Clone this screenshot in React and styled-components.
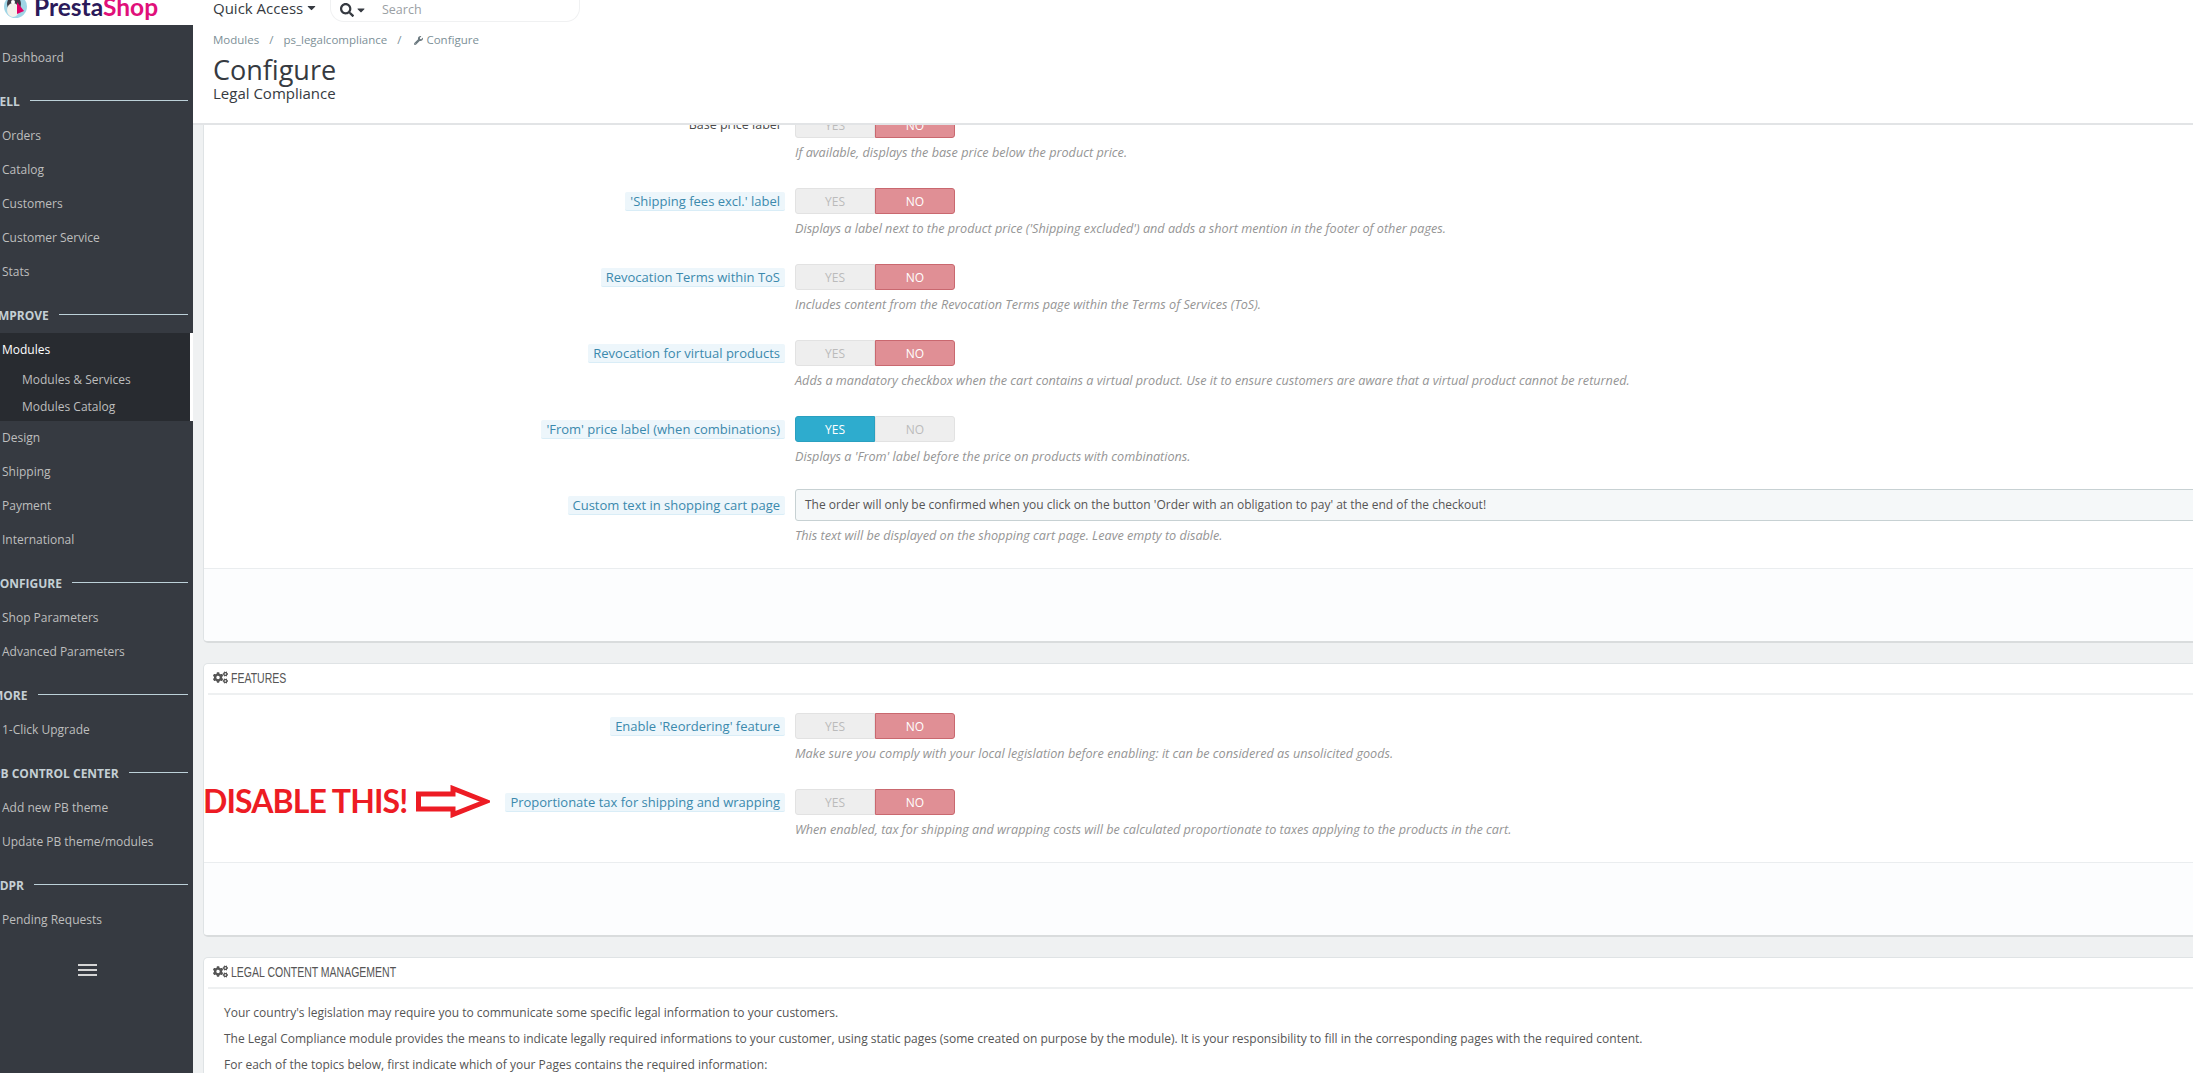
import React from "react";
import styled, { createGlobalStyle } from "styled-components";
import { FaCaretDown, FaCogs, FaSearch, FaWrench } from "react-icons/fa";

const Global = createGlobalStyle`
  html, body { margin: 0; padding: 0; height: 100%; overflow: hidden; background: #eff1f2; }
  body { font-family: "Open Sans", "Liberation Sans", sans-serif; font-size: 12px; color: #555; }
  * { box-sizing: border-box; }
`;

const Page = styled.div`
  display: grid;
  grid-template-columns: 193px 1fr;
  height: 1073px;
  width: 2193px;
  overflow: hidden;
`;
const LeftColumn = styled.div`
  display: flex;
  flex-direction: column;
  height: 1073px;
  background: #fff;
`;
const LogoBar = styled.div`
  height: 25px;
  display: flex;
  align-items: flex-start;
  padding-left: 4px;
  overflow: hidden;
  background: #fff;
`;
const LogoMark = styled.svg`
  width: 23px;
  height: 23px;
  margin-top: -5px;
  flex: none;
`;
const LogoText = styled.span`
  font-family: "Lato", sans-serif;
  font-weight: 700;
  font-size: 24.5px;
  line-height: 25px;
  margin: -6px 0 0 7px;
  color: #2b1a5a;
`;
const LogoPink = styled.span`
  color: #e0107a;
`;
const Sidebar = styled.nav`
  flex: 1;
  background: #363a41;
  padding-top: 16px;
  overflow: hidden;
`;
const NavItem = styled.div`
  height: 34px;
  line-height: 33px;
  padding-left: 2px;
  color: ${(p) => (p.$active ? "#fff" : "#bebebe")};
  white-space: nowrap;
`;
const ActiveBlock = styled.div`
  background: #282b30;
  border-right: 3px solid #fff;
  height: 88px;
`;
const SubItem = styled.div`
  height: 27px;
  line-height: 26px;
  padding-left: 22px;
  color: #bebebe;
`;
const Section = styled.div`
  height: 44px;
  display: flex;
  align-items: flex-end;
  padding-bottom: 9px;
  padding-right: 5px;
  margin-left: ${(p) => p.$shift}px;
  gap: 10px;
`;
const SectionName = styled.span`
  font-weight: 700;
  font-size: 12px;
  line-height: 16px;
  color: #c4cfd4;
  white-space: nowrap;
`;
const SectionRule = styled.span`
  flex: 1;
  height: 1px;
  background: #bcd0d8;
  margin-bottom: 9px;
`;
const Burger = styled.div`
  width: 19px;
  margin: 27px 0 0 78px;
  display: grid;
  gap: 3px;
`;
const BurgerBar = styled.span`
  height: 2px;
  background: #d5d5d5;
`;

const RightColumn = styled.div`
  display: flex;
  flex-direction: column;
  height: 1073px;
  min-width: 0;
`;
const Header = styled.header`
  height: 125px;
  flex: none;
  background: #fff;
  border-bottom: 2px solid #e2e4e6;
  padding-left: 20px;
  display: flex;
  flex-direction: column;
`;
const TopBar = styled.div`
  height: 24px;
  display: flex;
  align-items: flex-start;
`;
const QuickAccess = styled.div`
  display: flex;
  align-items: center;
  width: 117px;
  height: 15px;
  font-size: 15px;
  color: #363a41;
  gap: 2px;
`;
const SearchPill = styled.div`
  width: 250px;
  height: 24px;
  margin-top: -2px;
  border: 1px solid #f0f1f2;
  border-top: none;
  border-radius: 0 0 14px 14px;
  display: flex;
  align-items: center;
  padding-left: 9px;
  color: #363a41;
`;
const SearchHint = styled.span`
  margin-left: 15px;
  font-size: 12.5px;
  color: #9aa0a4;
`;
const Crumbs = styled.div`
  margin-top: 7px;
  height: 18px;
  line-height: 18px;
  font-size: 11.5px;
  color: #7d9097;
  display: flex;
  align-items: center;
`;
const CrumbSep = styled.span`
  margin: 0 10px;
`;
const CrumbIcon = styled.span`
  display: inline-flex;
  margin: 0 3px;
  color: #6c7a80;
`;
const Title = styled.h1`
  margin: 7px 0 0;
  font-weight: 400;
  font-size: 27px;
  line-height: 28px;
  color: #363a41;
`;
const Subtitle = styled.div`
  font-size: 15px;
  line-height: 18px;
  color: #363a41;
`;

const ScrollArea = styled.main`
  flex: 1;
  overflow: hidden;
  padding-left: 10px;
`;
const Scrolled = styled.div`
  margin-top: -17px;
  margin-right: -40px;
  display: flex;
  flex-direction: column;
  gap: 20px;
`;
const Panel = styled.section`
  background: #fff;
  border: 1px solid #dfe3e5;
  border-bottom: 2px solid #d9dcdd;
  border-radius: 5px;
  overflow: hidden;
`;
const PanelHead = styled.h3`
  margin: 0 4px;
  height: 31px;
  border-bottom: 2px solid #eef0f1;
  display: flex;
  align-items: center;
  padding: 0 0 2px 5px;
  color: #555;
  font-weight: 400;
`;
const HeadIcon = styled.span`
  display: inline-flex;
  color: #555;
  width: 18px;
`;
const HeadText = styled.span`
  display: inline-block;
  font-family: "Liberation Sans", sans-serif;
  font-size: 14px;
  white-space: nowrap;
  transform: scaleX(0.75);
  transform-origin: left center;
`;
const FormBody = styled.div`
  padding-top: ${(p) => p.$top || 0}px;
`;
const Row = styled.div`
  display: grid;
  grid-template-columns: 581px 1fr;
  column-gap: 10px;
  min-height: ${(p) => (p.$tall ? 79 : 76)}px;
  position: relative;
`;
const LabelCell = styled.div`
  display: flex;
  justify-content: flex-end;
  align-items: flex-start;
  padding-top: 7px;
`;
const Label = styled.span`
  height: 19px;
  line-height: 18px;
  padding: 0 5px;
  white-space: nowrap;
  font-size: ${(p) => (p.$hint ? 13 : 12.5)}px;
  color: ${(p) => (p.$hint ? "#3b89ad" : "#4a4a4a")};
  background: ${(p) => (p.$hint ? "#edf6fb" : "transparent")};
  border-bottom: 1px solid ${(p) => (p.$hint ? "#d9edf7" : "transparent")};
  border-radius: 2px;
`;
const Toggle = styled.div`
  display: flex;
  width: 160px;
  height: 26px;
  margin-top: 3px;
`;
const ToggleSide = styled.span`
  width: 80px;
  display: flex;
  align-items: center;
  justify-content: center;
  font-size: 12px;
  border: 1px solid;
  border-radius: ${(p) => (p.$left ? "3px 0 0 3px" : "0 3px 3px 0")};
  background: ${(p) => (p.$on === "no" ? "#e08f95" : p.$on === "yes" ? "#2eacce" : "#eee")};
  border-color: ${(p) => (p.$on === "no" ? "#c9686f" : p.$on === "yes" ? "#2aa0c0" : "#e2e2e2")};
  color: ${(p) => (p.$on ? "#fff" : "#bbb")};
`;
const TextField = styled.div`
  height: 32px;
  width: 1500px;
  background: #f5f8f9;
  border: 1px solid #c7d1d3;
  border-radius: 3px;
  padding-left: 9px;
  line-height: 30px;
  font-size: 12px;
  color: #555;
  white-space: nowrap;
`;
const Help = styled.p`
  margin: 5px 0 0;
  line-height: 18px;
  font-size: 12.65px;
  font-style: italic;
  color: #959595;
  white-space: nowrap;
`;
const PanelFoot = styled.div`
  height: 73px;
  background: #fcfdfe;
  border-top: 1px solid #eaedef;
`;
const Annotation = styled.div`
  position: absolute;
  left: -1px;
  top: -2px;
  display: flex;
  align-items: center;
  gap: 9px;
`;
const AnnotationText = styled.span`
  font-family: "Lato", sans-serif;
  font-weight: 700;
  font-size: 32px;
  line-height: 34px;
  letter-spacing: -0.9px;
  color: #ed1c24;
  white-space: nowrap;
`;
const Copy = styled.p`
  margin: 0;
  padding-left: 20px;
  line-height: 26px;
  white-space: nowrap;
  font-size: 12px;
  color: #555;
`;
const CopyBlock = styled.div`
  padding-top: 11px;
  padding-bottom: 20px;
`;

const Toggler = ({ on }) => (
  <Toggle>
    <ToggleSide $left $on={on === "yes" ? "yes" : undefined}>YES</ToggleSide>
    <ToggleSide $on={on === "no" ? "no" : undefined}>NO</ToggleSide>
  </Toggle>
);

const FormRow = ({ label, help, on = "no", hint = true, children }) => (
  <Row>
    <LabelCell><Label $hint={hint}>{label}</Label></LabelCell>
    <div>
      <Toggler on={on} />
      <Help>{help}</Help>
    </div>
    {children}
  </Row>
);

const Item = ({ children }) => <NavItem>{children}</NavItem>;
const Sec = ({ shift, children }) => (
  <Section $shift={shift}>
    <SectionName>{children}</SectionName>
    <SectionRule />
  </Section>
);

export default function App() {
  return (
    <Page>
      <Global />
      <LeftColumn>
        <LogoBar>
          <LogoMark viewBox="0 0 23 23">
            <circle cx="11.5" cy="11.5" r="11.5" fill="#9fd5e6" />
            <ellipse cx="10" cy="9" rx="7" ry="8" fill="#3c3a44" />
            <ellipse cx="9" cy="15" rx="6" ry="7" fill="#f4f1ea" />
            <path d="M13 7 L20 16 L13 19 Z" fill="#df0067" />
            <circle cx="9" cy="7" r="2" fill="#fff" />
          </LogoMark>
          <LogoText>Presta<LogoPink>Shop</LogoPink></LogoText>
        </LogoBar>
        <Sidebar>
          <Item>Dashboard</Item>
          <Sec shift={-7}>SELL</Sec>
          <Item>Orders</Item>
          <Item>Catalog</Item>
          <Item>Customers</Item>
          <Item>Customer Service</Item>
          <Item>Stats</Item>
          <Sec shift={-6}>IMPROVE</Sec>
          <ActiveBlock>
            <NavItem $active>Modules</NavItem>
            <SubItem>Modules &amp; Services</SubItem>
            <SubItem>Modules Catalog</SubItem>
          </ActiveBlock>
          <Item>Design</Item>
          <Item>Shipping</Item>
          <Item>Payment</Item>
          <Item>International</Item>
          <Sec shift={-8}>CONFIGURE</Sec>
          <Item>Shop Parameters</Item>
          <Item>Advanced Parameters</Item>
          <Sec shift={-8}>MORE</Sec>
          <Item>1-Click Upgrade</Item>
          <Sec shift={-7}>PB CONTROL CENTER</Sec>
          <Item>Add new PB theme</Item>
          <Item>Update PB theme/modules</Item>
          <Sec shift={-9}>GDPR</Sec>
          <Item>Pending Requests</Item>
          <Burger><BurgerBar /><BurgerBar /><BurgerBar /></Burger>
        </Sidebar>
      </LeftColumn>
      <RightColumn>
        <Header>
          <TopBar>
            <QuickAccess>Quick Access <FaCaretDown size={13} /></QuickAccess>
            <SearchPill>
              <FaSearch size={14} />
              <FaCaretDown size={12} style={{ marginLeft: 1 }} />
              <SearchHint>Search</SearchHint>
            </SearchPill>
          </TopBar>
          <Crumbs>
            Modules<CrumbSep>/</CrumbSep>ps_legalcompliance<CrumbSep>/</CrumbSep>
            <CrumbIcon><FaWrench size={9} /></CrumbIcon>Configure
          </Crumbs>
          <Title>Configure</Title>
          <Subtitle>Legal Compliance</Subtitle>
        </Header>
        <ScrollArea>
          <Scrolled>
            <Panel>
              <FormRow hint={false} label="Base price label" help="If available, displays the base price below the product price." />
              <FormRow label="'Shipping fees excl.' label" help="Displays a label next to the product price ('Shipping excluded') and adds a short mention in the footer of other pages." />
              <FormRow label="Revocation Terms within ToS" help="Includes content from the Revocation Terms page within the Terms of Services (ToS)." />
              <FormRow label="Revocation for virtual products" help="Adds a mandatory checkbox when the cart contains a virtual product. Use it to ensure customers are aware that a virtual product cannot be returned." />
              <FormRow on="yes" label="'From' price label (when combinations)" help="Displays a 'From' label before the price on products with combinations." />
              <Row $tall>
                <LabelCell><Label $hint>Custom text in shopping cart page</Label></LabelCell>
                <div>
                  <TextField>The order will only be confirmed when you click on the button 'Order with an obligation to pay' at the end of the checkout!</TextField>
                  <Help>This text will be displayed on the shopping cart page. Leave empty to disable.</Help>
                </div>
              </Row>
              <PanelFoot />
            </Panel>
            <Panel>
              <PanelHead><HeadIcon><FaCogs size={15} /></HeadIcon><HeadText>FEATURES</HeadText></PanelHead>
              <FormBody $top={15}>
                <FormRow label="Enable 'Reordering' feature" help="Make sure you comply with your local legislation before enabling: it can be considered as unsolicited goods." />
                <FormRow label="Proportionate tax for shipping and wrapping" help="When enabled, tax for shipping and wrapping costs will be calculated proportionate to taxes applying to the products in the cart.">
                  <Annotation>
                    <AnnotationText>DISABLE THIS!</AnnotationText>
                    <svg width="74" height="33" viewBox="0 0 74 33">
                      <path d="M2.5 9 H37 V3.5 L70 16.5 L37 29.5 V24 H2.5 Z" fill="#fff" stroke="#ed1c24" strokeWidth="5" />
                    </svg>
                  </Annotation>
                </FormRow>
              </FormBody>
              <PanelFoot />
            </Panel>
            <Panel>
              <PanelHead><HeadIcon><FaCogs size={15} /></HeadIcon><HeadText>LEGAL CONTENT MANAGEMENT</HeadText></PanelHead>
              <CopyBlock>
                <Copy>Your country's legislation may require you to communicate some specific legal information to your customers.</Copy>
                <Copy>The Legal Compliance module provides the means to indicate legally required informations to your customer, using static pages (some created on purpose by the module). It is your responsibility to fill in the corresponding pages with the required content.</Copy>
                <Copy>For each of the topics below, first indicate which of your Pages contains the required information:</Copy>
              </CopyBlock>
            </Panel>
          </Scrolled>
        </ScrollArea>
      </RightColumn>
    </Page>
  );
}
